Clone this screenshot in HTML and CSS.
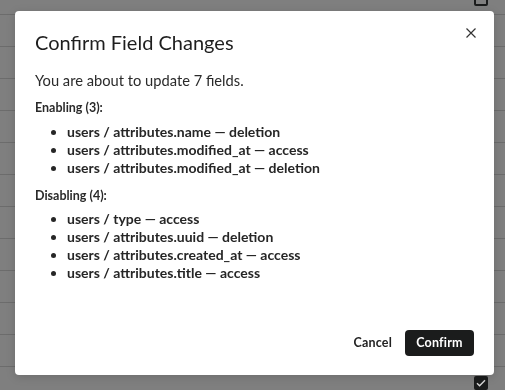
FILE: index.html
```html
<!DOCTYPE html>
<html lang="en">
<head>
  <meta charset="UTF-8">
  <title>Confirm Field Changes</title>
  <link rel="stylesheet" href="styles.css">
</head>
<body>
  <div class="table">
    <div class="row"><span class="check"></span></div>
    <div class="row"></div>
    <div class="row"></div>
    <div class="row"></div>
    <div class="row"></div>
    <div class="row"></div>
    <div class="row"></div>
    <div class="row"></div>
    <div class="row"></div>
    <div class="row"></div>
    <div class="row"></div>
    <div class="row"></div>
    <div class="row"><span class="check checked">
      <svg width="10" height="8" viewBox="0 0 10 8"><path d="M1 4.2l2.6 2.5L9 1.2" fill="none" stroke="#d8d8d8" stroke-width="1.4"/></svg>
    </span></div>
  </div>

  <div class="modal">
    <div class="modal-header">
      <h2>Confirm Field Changes</h2>
      <button class="close-button" aria-label="Close">
        <svg width="10" height="10" viewBox="0 0 10 10"><path d="M0.5 0.5L9.5 9.5M9.5 0.5L0.5 9.5" stroke="#333" stroke-width="1.2"/></svg>
      </button>
    </div>

    <p class="summary">You are about to update 7 fields.</p>

    <h3>Enabling (3):</h3>
    <ul>
      <li>users / attributes.name — deletion</li>
      <li>users / attributes.modified_at — access</li>
      <li>users / attributes.modified_at — deletion</li>
    </ul>

    <h3 class="second">Disabling (4):</h3>
    <ul>
      <li>users / type — access</li>
      <li>users / attributes.uuid — deletion</li>
      <li>users / attributes.created_at — access</li>
      <li>users / attributes.title — access</li>
    </ul>

    <div class="modal-footer">
      <button class="cancel-button">Cancel</button>
      <button class="confirm-button">Confirm</button>
    </div>
  </div>
</body>
</html>
```

FILE: styles.css
```css
:root {
  --backdrop: #7f7f7f;
  --row-line: #6c6c6c;
  --text: #222;
  --dark: #1b1c1c;
}

body {
  margin: 0;
  font-family: "Lato", "Liberation Sans", sans-serif;
  background-color: var(--backdrop);
  overflow: hidden;
}

.table {
  margin-top: -17px;
}

.row {
  height: 32px;
  box-sizing: border-box;
  border-bottom: 1px solid var(--row-line);
  display: flex;
  align-items: center;
  justify-content: flex-end;
  padding-right: 17px;
}

.check {
  width: 14px;
  height: 14px;
  box-sizing: border-box;
  border: 2px solid var(--dark);
  border-radius: 2px;
  display: flex;
  align-items: center;
  justify-content: center;
}

.check.checked {
  background-color: var(--dark);
}

.modal {
  position: fixed;
  top: 11px;
  left: 15px;
  width: 479px;
  height: 364px;
  box-sizing: border-box;
  background: #fff;
  border-radius: 4px;
  box-shadow: 0 2px 10px rgba(0,0,0,0.15);
  padding: 19px 18px 19px 20px;
  display: flex;
  flex-direction: column;
  color: var(--text);
}

.modal-header {
  display: flex;
  justify-content: space-between;
  align-items: flex-start;
}

h2 {
  margin: 0;
  font-size: 20px;
  line-height: 24px;
  font-weight: 400;
  color: #1e1e1e;
}

.close-button {
  background: none;
  border: none;
  padding: 0;
  margin-top: -2px;
  width: 10px;
  height: 10px;
  cursor: pointer;
  display: flex;
}

.summary {
  margin: 16px 0 0 0;
  font-size: 14.7px;
  line-height: 20px;
  color: #2a2a2a;
}

h3 {
  margin: 10px 0 0 0;
  font-size: 12.5px;
  line-height: 16px;
  font-weight: 700;
  color: #2a2a2a;
}

h3.second {
  margin-top: 11px;
}

ul {
  margin: 7px 0 0 0;
  padding-left: 32px;
  font-size: 14px;
  line-height: 18px;
  font-weight: 700;
  color: #262626;
}

h3.second + ul {
  margin-top: 6px;
}

.modal-footer {
  margin-top: auto;
  display: flex;
  justify-content: flex-end;
  align-items: center;
  gap: 13px;
  padding-right: 2px;
}

.cancel-button {
  background: none;
  border: none;
  font-family: inherit;
  font-size: 12.5px;
  font-weight: 700;
  color: #222;
  padding: 6px 0;
  cursor: pointer;
  letter-spacing: 0.2px;
}

.confirm-button {
  background-color: var(--dark);
  color: #fff;
  border: none;
  border-radius: 4px;
  font-family: inherit;
  font-size: 12.5px;
  font-weight: 700;
  height: 26px;
  width: 69px;
  padding: 0;
  cursor: pointer;
  letter-spacing: 0.2px;
}
```
